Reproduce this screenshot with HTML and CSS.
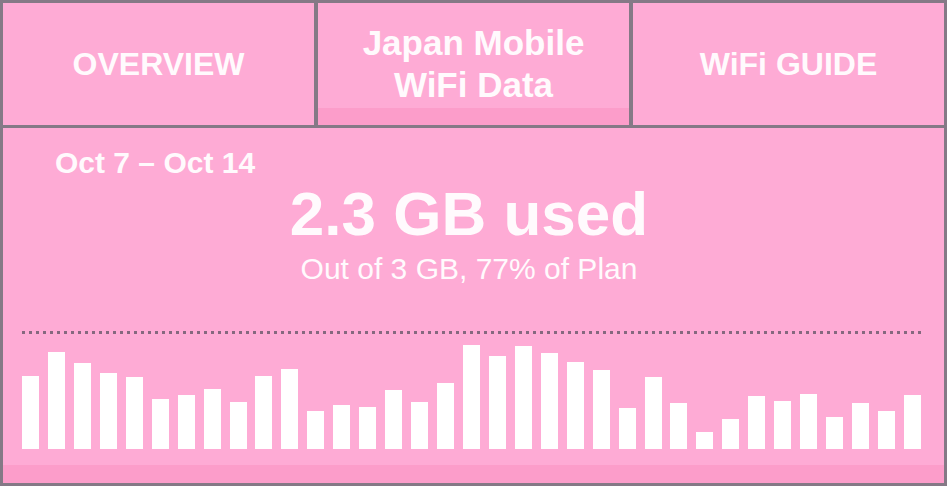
FILE: index.html
```html
<!DOCTYPE html>
<html lang="en">
<head>
<meta charset="utf-8">
<title>Japan Mobile WiFi Data</title>
<link rel="stylesheet" href="styles.css">
</head>
<body>
<div class="frame">
  <nav class="tabs">
    <div class="tab">OVERVIEW</div>
    <div class="tab tab-active">Japan Mobile<br>WiFi Data</div>
    <div class="tab">WiFi GUIDE</div>
  </nav>
  <main class="panel">
    <div class="summary">
      <div class="range">Oct 7 – Oct 14</div>
      <div class="used">2.3 GB used</div>
      <div class="plan">Out of 3 GB, 77% of Plan</div>
    </div>
    <div class="chart">
      <div class="dots"></div>
      <div class="bars">
        <div class="bar" style="height:73px"></div>
        <div class="bar" style="height:97px"></div>
        <div class="bar" style="height:86px"></div>
        <div class="bar" style="height:76px"></div>
        <div class="bar" style="height:72px"></div>
        <div class="bar" style="height:50px"></div>
        <div class="bar" style="height:54px"></div>
        <div class="bar" style="height:60px"></div>
        <div class="bar" style="height:47px"></div>
        <div class="bar" style="height:73px"></div>
        <div class="bar" style="height:80px"></div>
        <div class="bar" style="height:38px"></div>
        <div class="bar" style="height:44px"></div>
        <div class="bar" style="height:42px"></div>
        <div class="bar" style="height:59px"></div>
        <div class="bar" style="height:47px"></div>
        <div class="bar" style="height:66px"></div>
        <div class="bar" style="height:104px"></div>
        <div class="bar" style="height:93px"></div>
        <div class="bar" style="height:103px"></div>
        <div class="bar" style="height:96px"></div>
        <div class="bar" style="height:87px"></div>
        <div class="bar" style="height:79px"></div>
        <div class="bar" style="height:41px"></div>
        <div class="bar" style="height:72px"></div>
        <div class="bar" style="height:46px"></div>
        <div class="bar" style="height:17px"></div>
        <div class="bar" style="height:30px"></div>
        <div class="bar" style="height:53px"></div>
        <div class="bar" style="height:48px"></div>
        <div class="bar" style="height:55px"></div>
        <div class="bar" style="height:32px"></div>
        <div class="bar" style="height:46px"></div>
        <div class="bar" style="height:38px"></div>
        <div class="bar" style="height:54px"></div>
      </div>
    </div>
  </main>
</div>
</body>
</html>
```
FILE: styles.css
```css
* { box-sizing: border-box; }
html, body { margin: 0; padding: 0; }
body {
  width: 947px;
  height: 486px;
  overflow: hidden;
  background: #857986;
  font-family: "Liberation Sans", Arial, sans-serif;
  color: #fffafd;
}
.frame {
  width: 947px;
  height: 486px;
  border: 3px solid #857986;
  display: flex;
  flex-direction: column;
  background: #857986;
}
.tabs {
  display: flex;
  gap: 4px;
  border-bottom: 3px solid #857986;
  flex: none;
  height: 125px;
}
.tab {
  flex: 1 1 0;
  background: #feabd5;
  display: flex;
  align-items: center;
  justify-content: center;
  text-align: center;
  font-weight: bold;
  font-size: 32px;
  line-height: 42px;
}
.tab-active {
  font-size: 35px;
  box-shadow: inset 0 -17px 0 #fc9dca;
}
.panel {
  flex: 1 1 auto;
  background: #feabd5;
  box-shadow: inset 0 -18px 0 #fc9dca;
  padding-top: 20px;
}
.summary {
  padding: 0 61px 0 52px;
}
.range {
  font-weight: bold;
  font-size: 30px;
  line-height: 29px;
}
.used {
  margin-top: 7px;
  text-align: center;
  font-weight: bold;
  font-size: 62px;
  line-height: 60px;
}
.plan {
  margin-top: 10px;
  text-align: center;
  font-size: 30px;
  line-height: 30px;
}
.chart {
  margin: 47px 23px 0 19px;
}
.dots {
  height: 3px;
  background: repeating-linear-gradient(to right, #86687f 0 3px, transparent 3px 7px);
}
.bars {
  margin-top: 11px;
  height: 104px;
  display: flex;
  align-items: flex-end;
  justify-content: space-between;
}
.bar {
  width: 17px;
  background: #ffffff;
}
```
